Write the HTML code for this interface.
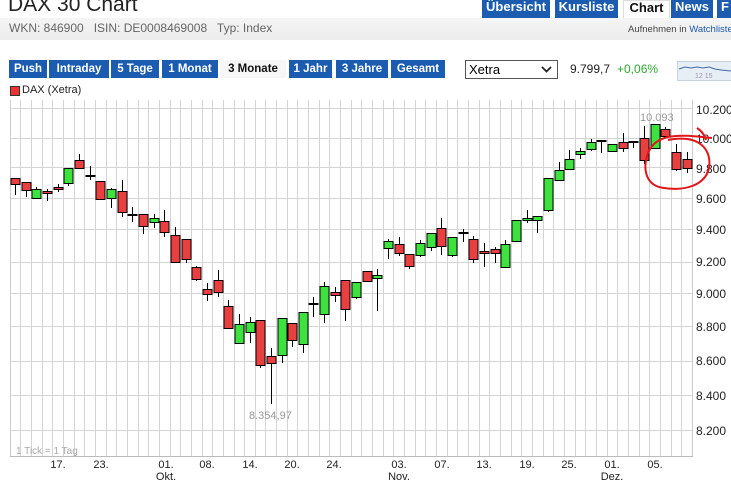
<!DOCTYPE html>
<html><head><meta charset="utf-8"><style>
body{margin:0;width:731px;height:490px;overflow:hidden;background:#fff;font-family:"Liberation Sans",sans-serif;position:relative}
.a{position:absolute;white-space:nowrap}
.tab{position:absolute;top:0;height:18px;background:#1b5cb0;color:#fff;font-weight:bold;font-size:13px;line-height:13px;text-align:center}
.btn{position:absolute;top:60px;height:18px;background:#1b5cb0;color:#fff;font-weight:bold;font-size:11.5px;line-height:18px;text-align:center}
</style></head><body>
<div class="a" style="left:8px;top:-7px;font-size:21px;color:#222">DAX 30 Chart</div>
<div class="tab" style="left:482px;width:68px">Übersicht</div>
<div class="tab" style="left:555px;width:63px">Kursliste</div>
<div class="tab" style="left:623px;width:45px;background:#fff;color:#111;border:1px solid #ddd;border-bottom:none">Chart</div>
<div class="tab" style="left:671px;width:42px">News</div>
<div class="tab" style="left:717px;width:20px;text-align:left;padding-left:4px">F</div>
<div class="a" style="left:0;top:18px;width:731px;height:22px;background:linear-gradient(#f5f5f5,#ececec)"></div>
<div class="a" style="left:9px;top:21px;font-size:12px;color:#666">WKN: 846900&nbsp;&nbsp; ISIN: DE0008469008&nbsp;&nbsp; Typ: Index</div>
<div class="a" style="left:628px;top:24px;font-size:9.5px;color:#444">Aufnehmen in <span style="color:#1b5cb0">Watchliste</span></div>
<div class="btn" style="left:9px;width:38px">Push</div>
<div class="btn" style="left:49px;width:60px">Intraday</div>
<div class="btn" style="left:111px;width:48px">5 Tage</div>
<div class="btn" style="left:162px;width:56px">1 Monat</div>
<div class="btn" style="left:220px;width:66px;background:#f6f6f6;color:#111">3 Monate</div>
<div class="btn" style="left:289px;width:43px">1 Jahr</div>
<div class="btn" style="left:336px;width:52px">3 Jahre</div>
<div class="btn" style="left:391px;width:54px">Gesamt</div>
<div class="a" style="left:465px;top:60px;width:88px;height:17px;border:1px solid #555;font-size:13px;line-height:17px;padding-left:3px;box-sizing:content-box">Xetra<svg style="position:absolute;right:5px;top:5px" width="11" height="7"><path d="M1 1 L5.5 5.5 L10 1" stroke="#222" stroke-width="1.8" fill="none"/></svg></div>
<div class="a" style="left:570px;top:62px;font-size:12px;color:#222">9.799,7</div>
<div class="a" style="left:617px;top:62px;font-size:12px;color:#2eaa2e">+0,06%</div>
<div class="a" style="left:677px;top:61px;width:54px;height:18px;background:#e8eef6;border:1px solid #c8d2de"></div>
<svg class="a" style="left:677px;top:61px" width="54" height="19"><path d="M2 8 L8 6 L14 7 L20 6 L26 7 L32 6 L38 8 L44 9 L54 10" stroke="#4466aa" fill="none"/><text x="18" y="17" font-size="7" fill="#99a">12 15</text></svg>
<div class="a" style="left:10px;top:86px;width:8px;height:8px;background:#e33;border:1px solid #333"></div>
<div class="a" style="left:22px;top:84px;font-size:11px;color:#222">DAX (Xetra)</div>
<svg class="a" style="left:0;top:0" width="731" height="490" font-family="Liberation Sans,sans-serif">
<g stroke="#d4d4d4" stroke-width="1" id="grid"></g>
<line x1="10.5" y1="100" x2="10.5" y2="456" stroke="#ccc"/>
<line x1="692.5" y1="100" x2="692.5" y2="456" stroke="#ccc"/>
<line x1="10" y1="456.5" x2="693" y2="456.5" stroke="#bbb"/>
<g font-size="12" fill="#222">
<text x="696" y="114">10.200</text><text x="696" y="143">10.000</text><text x="696" y="173">9.800</text><text x="696" y="203">9.600</text><text x="696" y="234">9.400</text><text x="696" y="266">9.200</text><text x="696" y="298">9.000</text><text x="696" y="331">8.800</text><text x="696" y="365">8.600</text><text x="696" y="400">8.400</text><text x="696" y="435">8.200</text>
</g>
<g font-size="11" fill="#222" text-anchor="middle">
<text x="58" y="468">17.</text><text x="101" y="468">23.</text><text x="166" y="468">01.</text><text x="166" y="480">Okt.</text><text x="207" y="468">08.</text><text x="250" y="468">14.</text><text x="292" y="468">20.</text><text x="334" y="468">24.</text><text x="399" y="468">03.</text><text x="399" y="480">Nov.</text><text x="442" y="468">07.</text><text x="484" y="468">13.</text><text x="527" y="468">19.</text><text x="569" y="468">25.</text><text x="612" y="468">01.</text><text x="612" y="480">Dez.</text><text x="655" y="468">05.</text>
</g>
<text x="16" y="454" font-size="10" fill="#aaa">1 Tick = 1 Tag</text>
<text x="249" y="419" font-size="11" fill="#999">8.354,97</text>
<text x="640" y="121" font-size="11" fill="#999">10.093</text>
<g id="c" stroke="#000" stroke-width="1"></g>
<path d="M668 140 C700 134 712 150 709 168 C705 186 684 191 664 188 C646 186 643 170 647 156 C650 146 656 140 668 137 C682 134 700 137 712 138 M697 128 C702 131 705 136 706 140" stroke="#e0161b" stroke-width="2" fill="none"/>
</svg>
<script>
var g=document.getElementById('grid'),s='';
[108,138,167,198,229,262,293,326,361,395,430].forEach(function(y){s+='<line x1="10" x2="692" y1="'+(y+.5)+'" y2="'+(y+.5)+'"/>';});
for(var k=0;k<65;k++){var x=Math.round(20.3+10.66*k)+.5;if(x<692)s+='<line x1="'+x+'" x2="'+x+'" y1="100" y2="456"/>';}
g.innerHTML=s;
var R='#e84040',G='#3ee23e';
var d=[[R,178,184,178,195],[R,182,190,182,197],[G,189,198,187,198],[R,191,193,189,201],[R,187,189,184,192],[G,168,183,168,186],[R,160,168,154,168],['x',176,176,166,180],[R,181,199,181,200],[G,189,198,188,208],[R,191,212,180,217],['x',215,215,207,222],[R,214,226,214,234],[G,218,222,214,228],[R,221,232,210,237],[R,235,262,227,262],[R,239,259,239,263],[R,267,279,266,281],[R,289,294,283,301],[R,280,292,270,297],[R,306,328,300,328],[G,324,343,314,343],[G,322,332,317,343],[R,320,365,320,368],[R,356,363,348,404],[G,318,355,318,363],[R,323,340,323,347],[G,312,344,312,353],['x',304,304,297,317],[G,286,314,282,323],[R,292,295,287,302],[R,280,309,280,321],[G,282,297,282,299],[R,271,281,271,281],[G,275,278,269,311],[G,241,248,239,259],[R,244,253,237,256],[R,254,266,254,269],[G,243,255,240,257],[G,233,247,233,251],[R,228,246,218,255],[G,237,255,237,257],['x',233,233,229,242],[R,239,259,236,263],[R,251,253,243,267],[R,249,253,247,263],[G,244,267,240,267],[G,220,241,220,241],[G,218,220,210,223],[G,216,220,216,233],[G,178,210,178,212],[G,170,180,162,180],[G,159,169,150,169],[G,151,154,148,159],[G,142,149,139,151],['x',141,141,141,153],[G,144,151,144,152],[R,142,148,133,152],['x',142,142,142,148],[R,138,160,126,164],[G,124,148,124,148],[R,129,136,127,136],[R,152,169,144,171],[R,159,168,152,173]];
var c='';
d.forEach(function(a,i){var x=Math.round(15+10.66*i)+.5;
c+='<line x1="'+x+'" x2="'+x+'" y1="'+a[3]+'" y2="'+a[4]+'"/>';
if(a[0]=='x')c+='<line x1="'+(x-5)+'" x2="'+(x+5)+'" y1="'+a[1]+'" y2="'+a[1]+'" stroke-width="2"/>';
else c+='<rect x="'+(x-4.5)+'" y="'+(a[1]+.5)+'" width="9" height="'+Math.max(2,a[2]-a[1])+'" fill="'+a[0]+'"/>';});
document.getElementById('c').innerHTML=c;
</script>
</body></html>
